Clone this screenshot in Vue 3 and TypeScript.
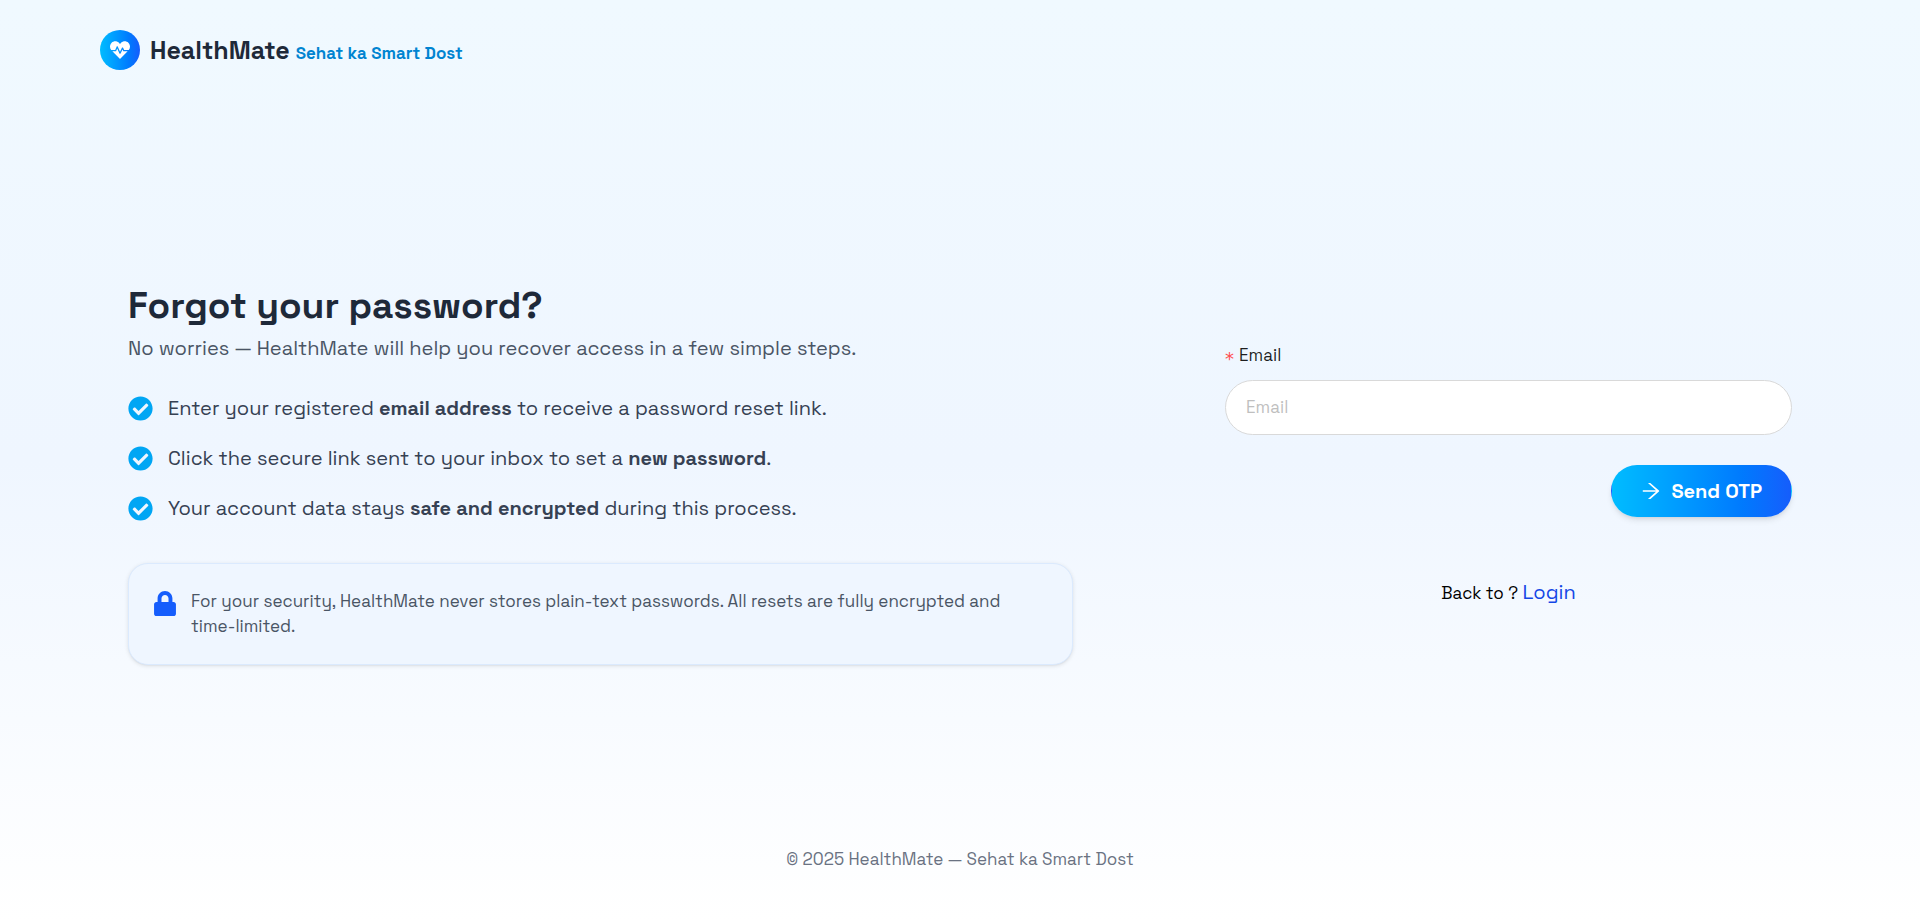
<script setup lang="ts">
import { ref } from 'vue'

interface Step {
  before: string
  strong: string
  after: string
}

const steps: Step[] = [
  { before: 'Enter your registered ', strong: 'email address', after: ' to receive a password reset link.' },
  { before: 'Click the secure link sent to your inbox to set a ', strong: 'new password', after: '.' },
  { before: 'Your account data stays ', strong: 'safe and encrypted', after: ' during this process.' },
]

const email = ref('')
</script>

<template>
  <div class="page">
    <header class="header">
      <span class="logo">
        <svg viewBox="0 0 512 512" aria-hidden="true">
          <path d="M320.2 243.8l-49.7 99.4c-6 12.1-23.4 11.7-28.9-.6l-56.9-126.3-30 71.7H60.6l182.5 186.5c7.1 7.3 18.6 7.3 25.7 0L451.4 288H342.3l-22.1-44.2zM473.7 73.9l-2.4-2.5c-51.5-52.6-135.8-52.6-187.4 0L256 100l-27.9-28.5c-51.5-52.7-135.9-52.7-187.4 0l-2.4 2.4C-10.4 123.7-12.5 203 31 256h102.4l35.9-86.2c5.4-12.9 23.6-13.1 29.2-.4l58.2 129.3 49-97.9c5.9-11.8 22.7-11.8 28.6 0l27.6 55.2H481c43.5-53 41.4-132.3-7.3-182.1z" />
        </svg>
      </span>
      <div class="brand">
        <span class="brand-name">HealthMate</span>
        <span class="brand-tag">Sehat ka Smart Dost</span>
      </div>
    </header>

    <main class="main">
      <section class="info">
        <h1>Forgot your password?</h1>
        <p class="lead">No worries — HealthMate will help you recover access in a few simple steps.</p>
        <ul class="steps">
          <li v-for="step in steps" :key="step.strong">
            <svg class="check" viewBox="0 0 512 512" aria-hidden="true">
              <path d="M504 256c0 136.967-111.033 248-248 248S8 392.967 8 256 119.033 8 256 8s248 111.033 248 248zM227.314 387.314l184-184c6.248-6.248 6.248-16.379 0-22.627l-22.627-22.627c-6.248-6.249-16.379-6.249-22.628 0L216 308.118l-70.059-70.059c-6.248-6.248-16.379-6.248-22.628 0l-22.627 22.627c-6.248 6.248-6.248 16.379 0 22.627l104 104c6.249 6.249 16.379 6.249 22.628.001z" />
            </svg>
            <span>{{ step.before }}<strong>{{ step.strong }}</strong>{{ step.after }}</span>
          </li>
        </ul>
        <div class="notice">
          <svg class="lock" viewBox="0 0 448 512" aria-hidden="true">
            <path d="M400 224h-24v-72C376 68.2 307.8 0 224 0S72 68.2 72 152v72H48c-26.5 0-48 21.5-48 48v192c0 26.5 21.5 48 48 48h352c26.5 0 48-21.5 48-48V272c0-26.5-21.5-48-48-48zm-104 0H152v-72c0-39.7 32.3-72 72-72s72 32.3 72 72v72z" />
          </svg>
          <p>For your security, HealthMate never stores plain-text passwords. All resets are fully encrypted and time-limited.</p>
        </div>
      </section>

      <section class="panel">
        <form class="form" @submit.prevent>
          <label for="email"><span class="required">*</span>Email</label>
          <input id="email" v-model="email" type="email" placeholder="Email" required />
          <button type="submit">
            <svg viewBox="64 64 896 896" aria-hidden="true">
              <path d="M869 487.8L491.2 159.9c-2.9-2.5-6.6-3.9-10.5-3.9h-88.5c-7.4 0-10.8 9.2-5.2 14l350.2 304H152c-4.4 0-8 3.6-8 8v60c0 4.4 3.6 8 8 8h585.1L386.9 854c-5.6 4.9-2.2 14 5.2 14h91.5c1.9 0 3.8-.7 5.2-2L869 536.2a32.07 32.07 0 000-48.4z" />
            </svg>
            <span>Send OTP</span>
          </button>
        </form>
        <p class="back">Back to ? <a href="#login">Login</a></p>
      </section>
    </main>

    <footer class="footer">© 2025 HealthMate — Sehat ka Smart Dost</footer>
  </div>
</template>

<style>
body {
  margin: 0;
}
</style>

<style scoped>
.page {
  box-sizing: border-box;
  min-height: 100vh;
  display: flex;
  flex-direction: column;
  background: linear-gradient(to bottom, #f0f9ff, #eff6ff 50%, #ffffff);
  color: #000000;
  font-family: "Space Grotesk", Inter, sans-serif;
}

.header {
  display: flex;
  align-items: center;
  gap: 10px;
  padding: 30px 100px;
}

.logo {
  display: flex;
  align-items: center;
  justify-content: center;
  width: 40px;
  height: 40px;
  border-radius: 50%;
  background: linear-gradient(to right in oklab, #00bcff, #155dfc);
}

.logo svg {
  width: 20px;
  height: 20px;
  fill: #ffffff;
}

.brand {
  display: flex;
  align-items: baseline;
  gap: 6px;
  padding-top: 2px;
  line-height: 32px;
}

.brand-name {
  color: #1e2939;
  font-size: 25px;
  font-weight: 600;
}

.brand-tag {
  color: #0084d1;
  font-size: 17px;
  font-weight: 600;
}

.main {
  flex: 1;
  display: grid;
  grid-template-columns: 5fr 3fr;
  column-gap: 152px;
  align-items: center;
  padding: 30px 128px 0;
}

h1 {
  margin: 0;
  color: #1e2939;
  font-size: 37px;
  font-weight: 700;
  line-height: 48px;
}

.lead {
  margin: 3px 0 0;
  color: #4a5565;
  font-size: 20px;
  line-height: 30px;
}

.steps {
  display: flex;
  flex-direction: column;
  gap: 20px;
  margin: 30px 0 40px;
  padding: 0;
  list-style: none;
  color: #364153;
  font-size: 20px;
  line-height: 30px;
}

.steps li {
  display: flex;
  align-items: center;
  gap: 15px;
}

.steps strong {
  font-weight: 700;
}

.check {
  flex: none;
  width: 25px;
  height: 25px;
  fill: #00a6f4;
}

.notice {
  display: flex;
  align-items: flex-start;
  gap: 15px;
  padding: 25px;
  border: 1px solid #dbeafe;
  border-radius: 20px;
  background: #eff6ff;
  box-shadow: 0 1px 4px rgba(0, 0, 0, 0.1), 0 1px 2px -1px rgba(0, 0, 0, 0.1);
}

.lock {
  flex: none;
  width: 22px;
  height: 25px;
  margin-top: 2px;
  fill: #155dfc;
}

.notice p {
  margin: 0;
  color: #4a5565;
  font-size: 17px;
  line-height: 25px;
}

.form {
  display: flex;
  flex-direction: column;
}

label {
  display: flex;
  align-items: center;
  gap: 5px;
  margin-bottom: 10px;
  color: rgba(0, 0, 0, 0.88);
  font-size: 17px;
  line-height: 30px;
}

.required {
  padding-top: 8px;
  color: #ff4d4f;
  font-family: "DejaVu Sans", sans-serif;
  font-size: 18px;
  line-height: 22px;
}

input {
  box-sizing: border-box;
  width: 100%;
  height: 55px;
  padding: 0 20px;
  border: 1px solid #d9d9d9;
  border-radius: 28px;
  background: #ffffff;
  color: rgba(0, 0, 0, 0.88);
  font-family: inherit;
  font-size: 17px;
  outline: none;
}

input::placeholder {
  color: #bfbfbf;
  opacity: 1;
}

button {
  align-self: flex-end;
  display: flex;
  align-items: center;
  gap: 10px;
  height: 52px;
  margin-top: 30px;
  padding: 0 29px;
  border: 1px solid transparent;
  border-radius: 26px;
  background: linear-gradient(to right in oklab, #00bcff, #155dfc);
  box-shadow: 0 4px 6px -1px rgba(0, 0, 0, 0.1), 0 2px 4px -2px rgba(0, 0, 0, 0.1);
  color: #ffffff;
  font-family: inherit;
  font-size: 20px;
  font-weight: 600;
  cursor: pointer;
}

button svg {
  width: 20px;
  height: 20px;
  fill: currentColor;
}

.back {
  margin: 60px 0 0;
  font-size: 17px;
  line-height: 30px;
  text-align: center;
}

.back a {
  color: #1447e6;
  font-size: 20px;
  text-decoration: none;
}

.footer {
  padding: 30px 0 50px;
  color: #6a7282;
  font-size: 17px;
  line-height: 25px;
  text-align: center;
}
</style>
